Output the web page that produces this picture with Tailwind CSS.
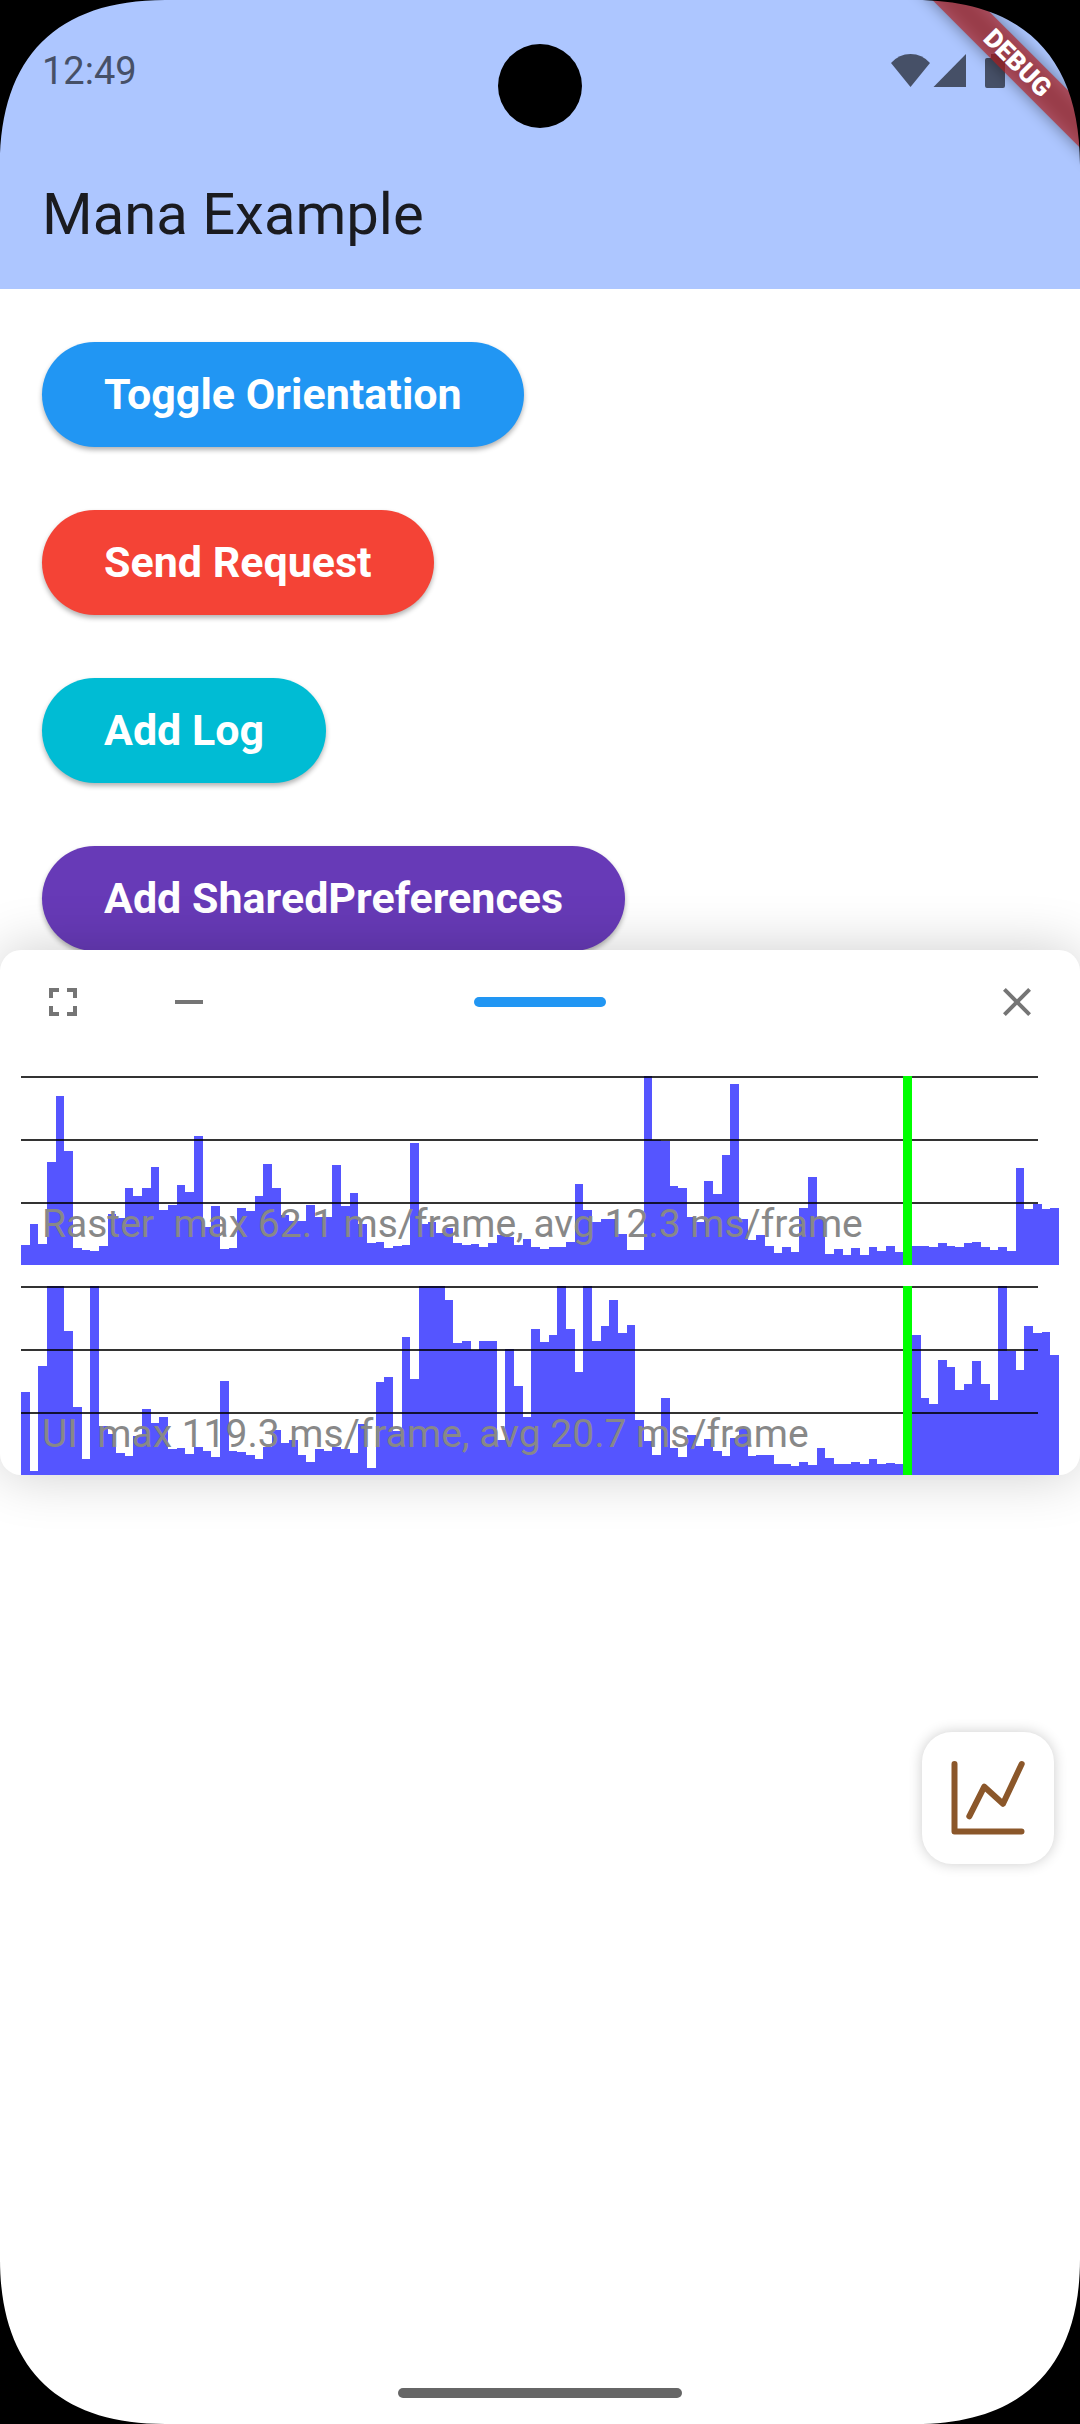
<!DOCTYPE html>
<html lang="en">
<head>
<meta charset="utf-8">
<meta name="viewport" content="width=device-width, initial-scale=1">
<title>Mana Example</title>
<script src="https://cdn.jsdelivr.net/npm/@tailwindcss/browser@4"></script>
</head>
<body class="bg-black font-['Roboto',sans-serif]">
<div class="relative flex min-h-screen flex-col overflow-hidden bg-white">

  <header class="relative bg-[#adc6ff]">
    <div class="flex h-[142px] items-center justify-between pl-[42px] pr-[74px] text-[#465067]">
      <time class="text-[38px] leading-[44px]">12:49</time>
      <svg class="h-[36px] w-[116px]" viewBox="0 0 116 36" fill="currentColor" aria-label="Wi-Fi, signal and battery">
        <path d="M1 10Q9 1 20.500 1T40 10L20.500 34Z"/>
        <path d="M43.500 34H76V1Z"/>
        <path d="M101 1h8v4h4a2 2 0 0 1 2 2v26a2 2 0 0 1-2 2H97a2 2 0 0 1-2-2V7a2 2 0 0 1 2-2h4Z"/>
      </svg>
    </div>
    <h1 class="flex h-[147px] items-center px-[42px] pb-1 text-[58px] leading-[72px] text-[#1a1b20]">Mana Example</h1>

    <!-- front camera -->
    <div class="absolute left-1/2 top-[44px] size-[84px] -translate-x-1/2 rounded-full bg-black"></div>

    <!-- debug ribbon -->
    <svg class="absolute right-0 top-0 size-[240px]" viewBox="0 0 240 240">
      <defs><filter id="soft" x="-20%" y="-100%" width="140%" height="300%"><feGaussianBlur stdDeviation="8"/></filter></defs>
      <g transform="translate(177 62) rotate(45)">
        <rect x="-160" y="-16" width="320" height="32" fill="#000" fill-opacity=".42" filter="url(#soft)"/>
        <rect x="-160" y="-16" width="320" height="32" fill="#b71c1c" fill-opacity=".63"/>
        <text x="1" y="9" text-anchor="middle" fill="#fff" class="text-[26px] font-black">DEBUG</text>
      </g>
    </svg>
  </header>

  <main class="flex flex-col items-start gap-[63px] px-[42px] pt-[53px]">
    <button class="h-[105px] rounded-full bg-[#2196f3] px-[62px] pb-[2px] text-[43px] font-bold leading-[60px] text-white shadow-[0_3px_5px_rgba(0,0,0,0.3)]">Toggle Orientation</button>
    <button class="h-[105px] rounded-full bg-[#f44336] px-[62px] pb-[2px] text-[43px] font-bold leading-[60px] text-white shadow-[0_3px_5px_rgba(0,0,0,0.3)]">Send Request</button>
    <button class="h-[105px] rounded-full bg-[#00bcd4] px-[62px] pb-[2px] text-[43px] font-bold leading-[60px] text-white shadow-[0_3px_5px_rgba(0,0,0,0.3)]">Add Log</button>
    <button class="h-[105px] rounded-full bg-[#673ab7] px-[62px] pb-[2px] text-[43px] font-bold leading-[60px] text-white shadow-[0_3px_5px_rgba(0,0,0,0.3)]">Add SharedPreferences</button>
  </main>

  <!-- performance sheet, floats over the page -->
  <section class="absolute inset-x-0 top-[950px] rounded-[21px] bg-white shadow-[0_0_56px_rgba(0,0,0,0.2)]" aria-label="Performance">
    <div class="grid h-[105px] grid-cols-[1fr_auto_1fr] items-center pb-px text-[#757575]">
      <div class="flex">
        <button class="grid h-[104px] w-[126px] place-items-center" aria-label="Full screen">
          <svg class="size-[48px]" viewBox="0 0 24 24" fill="currentColor"><path d="M7 14H5v5h5v-2H7v-3zm-2-4h2V7h3V5H5v5zm12 7h-3v2h5v-5h-2v3zM14 5v2h3v3h2V5h-5z"/></svg>
        </button>
        <button class="grid h-[104px] w-[126px] place-items-center" aria-label="Minimize">
          <svg class="size-[48px]" viewBox="0 0 24 24" fill="currentColor"><path d="M19 13H5v-2h14v2z"/></svg>
        </button>
      </div>
      <div class="h-[10px] w-[132px] rounded-full bg-[#2196f3]"></div>
      <button class="grid h-[104px] w-[126px] place-items-center justify-self-end" aria-label="Close">
        <svg class="size-[48px]" viewBox="0 0 24 24" fill="currentColor"><path d="M19 6.410 17.590 5 12 10.590 6.410 5 5 6.410 10.590 12 5 17.590 6.410 19 12 13.410 17.590 19 19 17.590 13.410 12z"/></svg>
      </button>
    </div>

    <div class="flex flex-col gap-[21px] px-[21px] pt-[21px]">
      <figure class="relative h-[189px]">
        <svg class="block size-full" viewBox="0 0 120 189" preserveAspectRatio="none" shape-rendering="crispEdges" data-samples="20,41,21,103,169,114,17,15,14,19,51,47,77,69,77,98,55,60,80,73,129,38,59,16,17,57,54,69,101,77,50,44,44,60,48,48,100,59,72,41,22,23,17,19,20,122,41,43,32,37,22,20,21,18,22,30,28,20,26,18,16,18,18,23,81,55,43,46,46,31,15,15,189,125,124,79,77,48,43,84,71,110,181,46,25,30,19,12,18,13,57,88,46,11,16,10,17,10,18,14,19,13,189,19,19,18,22,19,18,22,23,18,15,18,14,97,56,61,56,57"></svg>
        <div class="absolute inset-y-0 left-0 right-[21px] grid grid-rows-3">
          <div class="border-t-2 border-black/80"></div><div class="border-t-2 border-black/80"></div><div class="border-t-2 border-black/80"></div>
        </div>
        <div class="absolute inset-y-0 left-[85%] w-[9px] bg-[#00ff00]"></div>
        <figcaption class="absolute bottom-[19px] left-[21px] whitespace-pre text-[39px] leading-[44px] text-[#888888]">Raster  max 62.1 ms/frame, avg 12.3 ms/frame</figcaption>
      </figure>
      <figure class="relative h-[189px]">
        <svg class="block size-full" viewBox="0 0 120 189" preserveAspectRatio="none" shape-rendering="crispEdges" data-samples="83,4,109,189,189,144,68,16,189,49,41,22,19,39,66,52,58,26,27,21,28,24,18,94,24,23,20,16,28,45,32,35,20,13,26,24,28,26,22,51,7,93,98,44,138,96,189,189,189,175,132,134,125,134,134,35,126,89,58,146,133,140,189,146,103,189,134,149,175,142,150,55,34,20,77,27,18,40,29,36,24,19,37,48,19,20,20,11,11,9,13,10,27,17,11,11,13,11,16,11,12,11,189,140,77,71,115,108,85,91,114,91,75,189,124,105,149,142,143,120"></svg>
        <div class="absolute inset-y-0 left-0 right-[21px] grid grid-rows-3">
          <div class="border-t-2 border-black/80"></div><div class="border-t-2 border-black/80"></div><div class="border-t-2 border-black/80"></div>
        </div>
        <div class="absolute inset-y-0 left-[85%] w-[9px] bg-[#00ff00]"></div>
        <figcaption class="absolute bottom-[19px] left-[21px] whitespace-pre text-[39px] leading-[44px] text-[#888888]">UI  max 119.3 ms/frame, avg 20.7 ms/frame</figcaption>
      </figure>
    </div>
  </section>

  <!-- floating button -->
  <button class="absolute right-[26px] top-[1732px] size-[132px] rounded-[30px] bg-white shadow-[0_0_14px_rgba(0,0,0,0.2)]" aria-label="Charts">
    <svg class="size-full" viewBox="0 0 132 132" fill="none" stroke="#8b572a" stroke-width="6" stroke-linecap="round" stroke-linejoin="round">
      <path d="M32.500 32V99.500H99.500M47.300 84.300 62.300 54.700 81 71.700 99.700 32"/>
    </svg>
  </button>

  <!-- navigation handle -->
  <div class="mt-auto flex justify-center pb-[26px]">
    <div class="h-[10px] w-[284px] rounded-full bg-[#666666]"></div>
  </div>

  <!-- rounded display corners -->
  <svg class="pointer-events-none absolute left-0 top-0 size-[165px]" viewBox="0 0 165 165"><path d="M0 0H165C57 0 0 57 0 165Z"/></svg>
  <svg class="pointer-events-none absolute right-0 top-0 size-[165px] rotate-90" viewBox="0 0 165 165"><path d="M0 0H165C57 0 0 57 0 165Z"/></svg>
  <svg class="pointer-events-none absolute bottom-0 right-0 size-[165px] rotate-180" viewBox="0 0 165 165"><path d="M0 0H165C57 0 0 57 0 165Z"/></svg>
  <svg class="pointer-events-none absolute bottom-0 left-0 size-[165px] -rotate-90" viewBox="0 0 165 165"><path d="M0 0H165C57 0 0 57 0 165Z"/></svg>
</div>

<script>
  // One column per frame sample; drawn as a single stepped outline.
  document.querySelectorAll('svg[data-samples]').forEach(function (svg) {
    var d = 'M0 189';
    svg.dataset.samples.split(',').forEach(function (h, i) {
      d += 'V' + (189 - h) + 'H' + (i + 1);
    });
    var path = document.createElementNS('http://www.w3.org/2000/svg', 'path');
    path.setAttribute('d', d + 'V189Z');
    path.setAttribute('fill', '#5555ff');
    svg.appendChild(path);
  });
</script>
</body>
</html>
